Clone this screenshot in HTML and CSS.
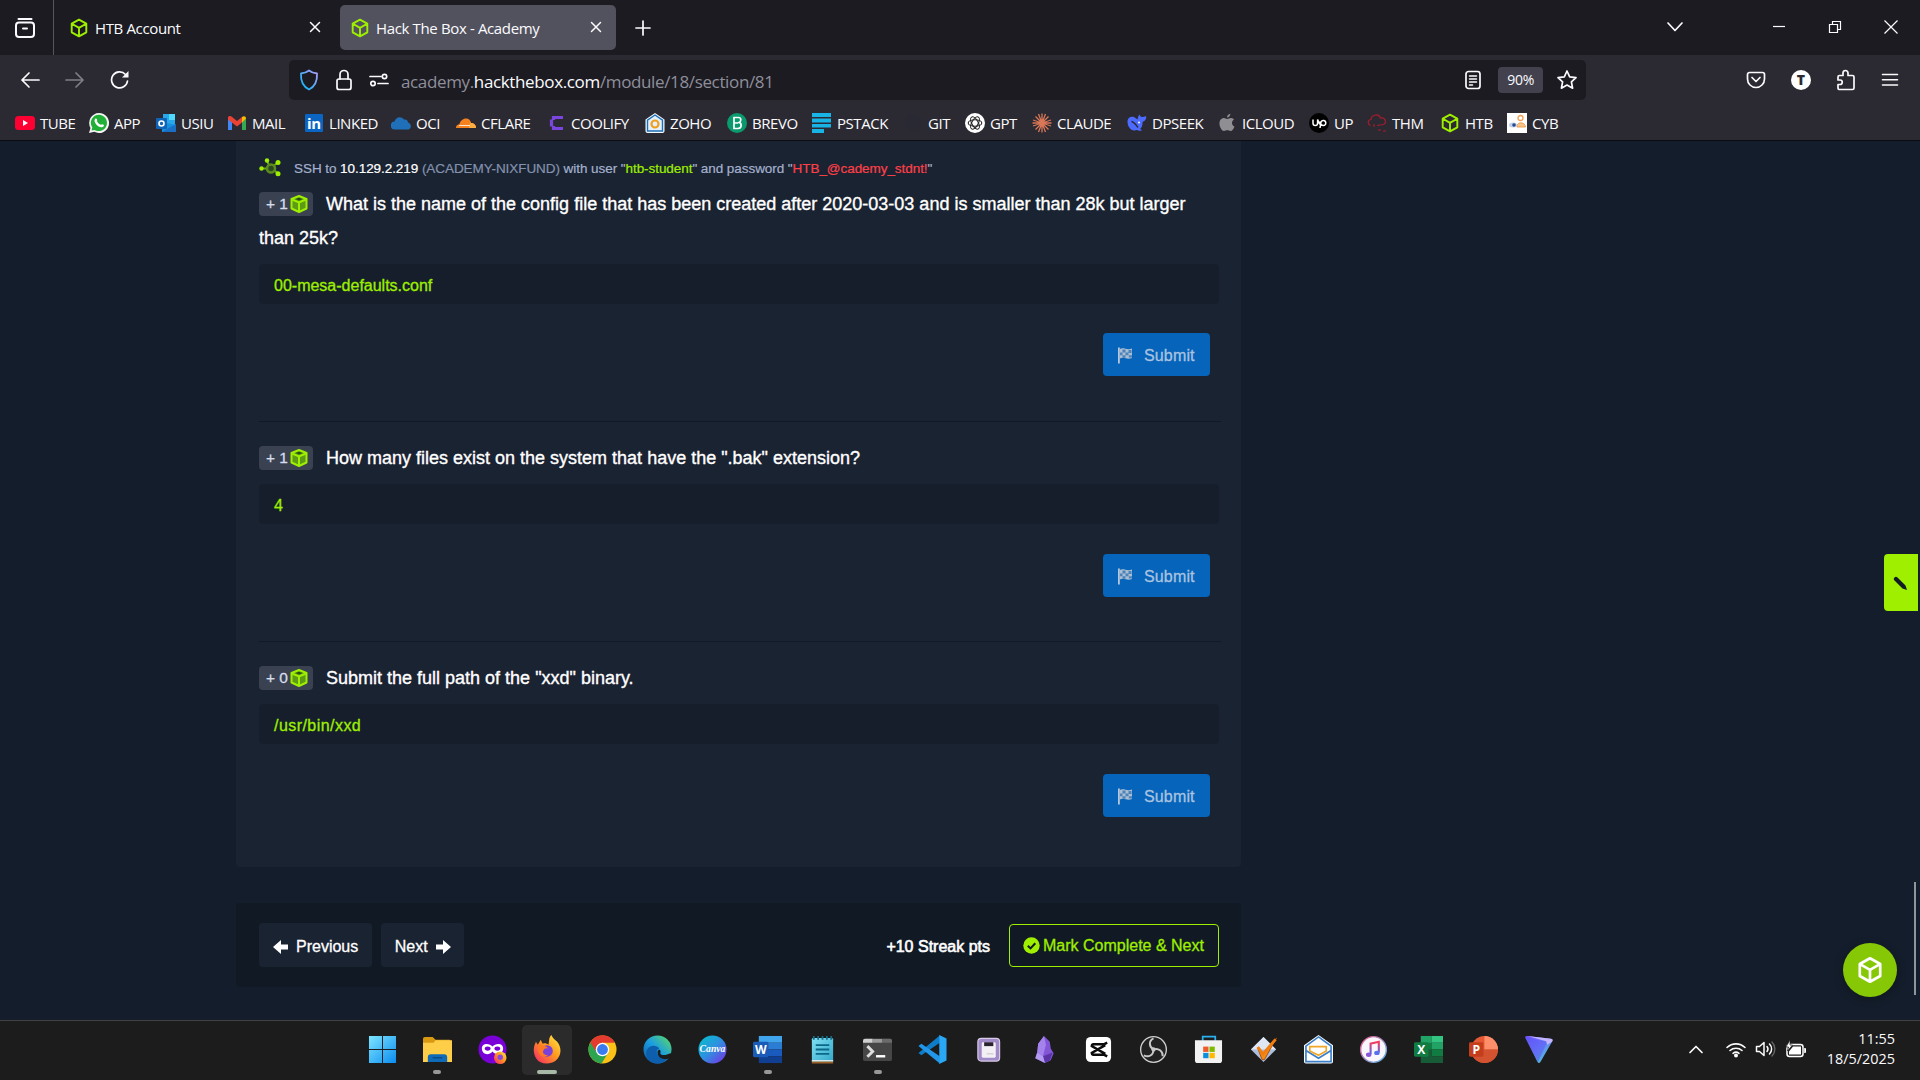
FILE: index.html
```
<!DOCTYPE html>
<html lang="en">
<head>
  <meta charset="UTF-8">
  <title>Hack The Box - Academy</title>
  <link rel="stylesheet" href="styles.css">
</head>
<body>

<svg class="defs">
  <defs>
    <symbol id="cube" viewBox="0 0 20 20">
      <path d="M10 1.6 17.3 5.7v8.6L10 18.4 2.7 14.3V5.7zM2.9 5.8 10 9.9l7.1-4.1M10 9.9v8.3" fill="none" stroke="currentColor" stroke-width="1.9" stroke-linejoin="round"/>
    </symbol>
    <symbol id="box" viewBox="0 0 18 18">
      <path d="M9 1 16.5 4v9.5L9 17 1.500 13.500V4z" fill="#5d9a16" stroke="#9fef00" stroke-width="2" stroke-linejoin="round"/>
      <path d="M2 4.500 9 7.500l7-3M9 7.500V17" fill="none" stroke="#9fef00" stroke-width="2"/>
      <path d="M5.500 4 9 2.800 12.500 4 9 5.500z" fill="#2b4a1c"/>
    </symbol>
    <symbol id="flag" viewBox="0 0 16 17">
      <path d="M1 .5h1.800V16.500H1z" fill="#b5c7da"/>
      <path d="M2.800 2c4-2 7 1.500 12.200-.5v9.500c-5 2-8-1.500-12.200.5z" fill="#a9bdd3"/>
      <path d="M5.500 2.500h3v3h-3zM11.500 3h3v3h-3zM8.500 5.500h3v2.800h-3zM3 5.500h2.500v2.800H3zM5.500 8.300h3v2.400h-3zM11.800 8.300H15v2.300h-3.200z" fill="#4c83bb"/>
    </symbol>
    <linearGradient id="gShield" x1="0" y1="1" x2="1" y2="0"><stop offset="0" stop-color="#00b7f4"/><stop offset="1" stop-color="#b29cf8"/></linearGradient>
    <linearGradient id="gWin" x1="0" y1="0" x2="1" y2="1"><stop offset="0" stop-color="#7fe6ff"/><stop offset="1" stop-color="#0a8cf0"/></linearGradient>
    <linearGradient id="gFox" x1="1" y1="0" x2="0" y2="1"><stop offset="0" stop-color="#fff04a"/><stop offset=".45" stop-color="#ff9a1f"/><stop offset="1" stop-color="#f5206a"/></linearGradient>
    <linearGradient id="gEdge" x1="0" y1="1" x2="1" y2="0"><stop offset="0" stop-color="#0c59a4"/><stop offset=".5" stop-color="#1b9de2"/><stop offset="1" stop-color="#62de5a"/></linearGradient>
    <linearGradient id="gCanva" x1="0" y1="0" x2="1" y2="1"><stop offset="0" stop-color="#00c4cc"/><stop offset=".5" stop-color="#2f8fe0"/><stop offset="1" stop-color="#7d2ae8"/></linearGradient>
    <linearGradient id="gNote" x1="0" y1="0" x2="1" y2="1"><stop offset="0" stop-color="#7fe0f2"/><stop offset="1" stop-color="#32a7c9"/></linearGradient>
    <linearGradient id="gMusic" x1="0" y1="0" x2="0" y2="1"><stop offset="0" stop-color="#fa3c5a"/><stop offset="1" stop-color="#4a6cf0"/></linearGradient>
    <linearGradient id="gRing" x1="0" y1="0" x2="1" y2="1"><stop offset="0" stop-color="#f05a8c"/><stop offset="1" stop-color="#58b8f0"/></linearGradient>
    <linearGradient id="gVpn" x1="0" y1="0" x2="1" y2="1"><stop offset="0" stop-color="#6d4aff"/><stop offset=".45" stop-color="#6f7bff"/><stop offset="1" stop-color="#3de0c0"/></linearGradient>
  </defs>
</svg>

<div class="browser">
  <header class="tabbar">
    <div class="firefox-view">
      <svg width="22" height="22" viewBox="0 0 22 22" fill="none" stroke="#fbfbfe" stroke-width="2" stroke-linecap="round"><path d="M4.500 2h13"/><rect x="2" y="5.500" width="18" height="14.500" rx="3"/><path d="M9 11.500h4"/></svg>
    </div>
    <div class="tab">
      <svg class="fav" width="20" height="20"><use href="#cube"/></svg>
      <span>HTB Account</span>
      <svg class="close" width="12" height="12" viewBox="0 0 12 12"><path d="M1.500 1.500l9 9M10.500 1.500l-9 9"/></svg>
    </div>
    <div class="tab active">
      <svg class="fav" width="20" height="20"><use href="#cube"/></svg>
      <span>Hack The Box - Academy</span>
      <svg class="close" width="12" height="12" viewBox="0 0 12 12"><path d="M1.500 1.500l9 9M10.500 1.500l-9 9"/></svg>
    </div>
    <svg class="line plus" width="16" height="16" viewBox="0 0 16 16"><path d="M8 1v14M1 8h14"/></svg>
    <div class="window-controls">
      <svg class="line" width="18" height="12" viewBox="0 0 18 12"><path d="M2 2l7 7.500L16 2"/></svg>
      <svg class="thin min" width="14" height="14" viewBox="0 0 14 14"><path d="M1 6.500h12"/></svg>
      <svg class="thin" width="14" height="14" viewBox="0 0 14 14"><path d="M1.500 4.500h8v8h-8zM4.500 4.500v-3h8v8h-3"/></svg>
      <svg class="thin" width="14" height="14" viewBox="0 0 14 14"><path d="M.5 .5l13 13M13.500.5l-13 13"/></svg>
    </div>
  </header>

  <div class="toolbar">
    <div class="nav">
      <svg class="line" width="20" height="18" viewBox="0 0 20 18"><path d="M9 2 2 9l7 7M2 9h17"/></svg>
      <svg class="line dim" width="20" height="18" viewBox="0 0 20 18"><path d="M11 2l7 7-7 7M18 9H1"/></svg>
      <svg class="line" width="20" height="20" viewBox="0 0 20 20"><path d="M17.500 11A8 8 0 1 1 15.500 4.500"/><path d="M18.500 1v6.500H12z" fill="#fbfbfe" stroke="none"/></svg>
    </div>
    <div class="urlbar">
      <svg width="20" height="22" viewBox="0 0 20 22" fill="none" stroke="url(#gShield)" stroke-width="1.800" stroke-linejoin="round"><path d="M10 1.500c2.500 2 5 2.800 8 3 .4 7-2 13-8 16-6-3-8.400-9-8-16 3-.2 5.500-1 8-3z"/></svg>
      <svg class="line lock" width="18" height="22" viewBox="0 0 18 22"><rect x="2" y="10" width="14" height="10.500" rx="2"/><path d="M5 10V5.500a4 4 0 0 1 8 0V10"/></svg>
      <svg class="line perms" width="20" height="14" viewBox="0 0 20 14"><path d="M1 3.500h11M9 10.500h10"/><circle cx="15.500" cy="3.500" r="2.200"/><circle cx="4" cy="10.500" r="2.200"/></svg>
      <p class="url">academy.<b>hackthebox.com</b>/module/18/section/81</p>
      <svg class="line" width="18" height="20" viewBox="0 0 18 20"><rect x="2" y="1.500" width="14" height="17" rx="2.500"/><path d="M5.500 6h7M5.500 9h7M5.500 12h7M5.500 15h3" stroke-width="1.500"/></svg>
      <span class="zoom">90%</span>
      <svg class="line star" width="22" height="22" viewBox="0 0 22 22"><path d="M11 2l2.700 5.800 6.300.8-4.600 4.300 1.200 6.300L11 16.100l-5.600 3.100 1.200-6.300L2 8.600l6.300-.8z"/></svg>
    </div>
    <div class="actions">
      <svg class="line" width="20" height="18" viewBox="0 0 20 18"><path d="M3.500 1.500h13A2 2 0 0 1 18.500 3.500v4.500a8.500 8.500 0 0 1-17 0V3.500a2 2 0 0 1 2-2zM6 6.500l4 4 4-4"/></svg>
      <span class="account">T</span>
      <svg class="line" width="20" height="22" viewBox="0 0 20 22"><path d="M3 20.500h13.500a1.500 1.500 0 0 0 1.500-1.500V8a1.500 1.500 0 0 0-1.500-1.500H12V4a2.500 2.500 0 0 0-5 0v2.500H3.500A1.500 1.500 0 0 0 2 8v3h2a2.200 2.200 0 0 1 0 4.500H2v3.500a1.500 1.500 0 0 0 1 1.500z"/></svg>
      <svg class="line" width="18" height="16" viewBox="0 0 18 16"><path d="M1.500 2.500h15M1.500 7.700h15M1.500 13h15" stroke-width="1.600"/></svg>
    </div>
  </div>

  <nav class="bookmarks">
    <a><svg viewBox="0 0 20 20"><rect y="3" width="20" height="14" rx="3.500" fill="#ff0033"/><path d="M8 7l5 3-5 3z" fill="#fff"/></svg>TUBE</a>
    <a><svg viewBox="0 0 20 20"><path d="M10 0a10 10 0 1 1-4.700 18.800L0 20l1.500-5A10 10 0 0 1 10 0z" fill="#f4f4f4"/><path d="M10 1.700a8.200 8.200 0 1 1-4.500 15.200L2.500 17.500l.8-3A8.200 8.200 0 0 1 10 1.700z" fill="#20b038"/><path d="M6.500 5.500c1.500-.5 2 1.800 1.500 2.800 1 2 2 3 4 3.500 1.500-1.500 3 .2 3 1-1.500 2.500-5 1.500-7-.5S4.500 7 6.500 5.500z" fill="#fff"/></svg>APP</a>
    <a><svg viewBox="0 0 20 20"><path d="M7 1h12v12H7z" fill="#28a8ea"/><path d="M13 1h6v6h-6z" fill="#50d9ff"/><path d="M6 9l14 3v7H6z" fill="#1490df"/><path d="M6 19l14-8v8z" fill="#1a6fc4"/><rect y="5" width="11" height="11" rx="1" fill="#0f64b8"/><circle cx="5.500" cy="10.500" r="2.500" fill="none" stroke="#fff" stroke-width="1.600"/></svg>USIU</a>
    <a><svg viewBox="0 0 20 20"><path d="M1 5v12h4V9z" fill="#4285f4"/><path d="M19 5v12h-4V9z" fill="#34a853"/><path d="M1 4.500C1 3 3 2.500 4.500 3.500L10 8l5-4v5.500l-5 4-9-7z" fill="#ea4335"/><path d="M15 4c2-1.500 4-.5 4 1.500l-4 4z" fill="#fbbc04"/></svg>MAIL</a>
    <a><svg viewBox="0 0 20 20"><rect x="1" y="1" width="18" height="18" rx="1" fill="#0a66c2"/><text x="3" y="15.500" class="in">in</text></svg>LINKED</a>
    <a><svg viewBox="0 0 20 20"><path d="M4 16.500a4 4 0 0 1-.5-8C4.500 4 10 2.500 13 6.500c3-.3 4 1.500 4 3 4 1 3.500 7 0 7z" fill="#1f70b8"/></svg>OCI</a>
    <a><svg viewBox="0 0 20 20"><path d="M0 15c0-2.500 1.500-3.500 3.500-3.700C4 8 7 5.500 10 5.500c3 0 4.500 2 5.200 4.500C18 10 20 12 20 15z" fill="#f6821f"/><path d="M14 10c4-.5 6 2 6 5h-7z" fill="#fbad41"/><path d="M3 12.500h11" stroke="#fff" stroke-width=".8"/></svg>CFLARE</a>
    <a><svg viewBox="0 0 20 20"><path d="M17 4.500H7.500V7M17 15.500H7.500V13M5.500 6.500v7" fill="none" stroke="#7b45e0" stroke-width="3.200"/></svg>COOLIFY</a>
    <a><svg viewBox="0 0 20 20"><path d="M10 0l9.500 6.500V18A2 2 0 0 1 17.500 20h-15A2 2 0 0 1 .5 18V6.500z" fill="#f5f8fc"/><path d="M10 2l7.500 5.200V18h-15V7.200z" fill="#e4f1fc" stroke="#1c6eb4" stroke-width="1.400"/><circle cx="10" cy="11" r="3.500" fill="none" stroke="#f0a020" stroke-width="2.200"/></svg>ZOHO</a>
    <a><svg viewBox="0 0 20 20"><circle cx="10" cy="10" r="10" fill="#0b996e"/><path d="M7 4.500h4.500c3 0 3 4 .5 5 3 .5 3 6-1 6H7zM7 10h4" fill="none" stroke="#fff" stroke-width="1.700"/></svg>BREVO</a>
    <a><svg viewBox="0 0 20 20"><path d="M0 0h19v4H0zM0 5.500h19v4H0zM0 11h19v3.500H0zM0 16h12v4H0z" fill="#18b4e6"/></svg>PSTACK</a>
    <a><svg viewBox="0 0 20 20"><circle cx="10" cy="10" r="8" fill="#292933"/></svg>GIT</a>
    <a><svg viewBox="0 0 20 20"><circle cx="10" cy="10" r="10" fill="#fff"/><g fill="none" stroke="#222" stroke-width="1.100"><ellipse cx="10" cy="10" rx="6.800" ry="3.200"/><ellipse cx="10" cy="10" rx="6.800" ry="3.200" transform="rotate(60 10 10)"/><ellipse cx="10" cy="10" rx="6.800" ry="3.200" transform="rotate(120 10 10)"/></g></svg>GPT</a>
    <a><svg viewBox="0 0 20 20"><path d="M10 .5v19M.5 10h19M3.500 3.500l13 13M16.500 3.500l-13 13M6.500 1l7 18M13.500 1l-7 18M1 7l18 6M1 13l18-6" stroke="#d97757" stroke-width="1.300"/></svg>CLAUDE</a>
    <a><svg viewBox="0 0 20 20"><path d="M.5 8C.8 4.500 4 3 7 4l3.500 2.500C11 3.500 12 2 12.500 1.500c.5 2.500 3 3.500 6.500 1.500.8 3-1 5-3.500 6 .3 3.500-.8 5.500-2.500 7 1.500.6 2 1 1.500 1.500-2 .6-3.500 0-4.500-.6C4.500 19 .2 14 .5 8z" fill="#4d6bfe"/><path d="M4.500 8.500c3 .5 4.500 3.500 6.500 6" stroke="#2b2a33" stroke-width="1.500" fill="none"/><circle cx="12" cy="9.500" r="1" fill="#fff"/></svg>DPSEEK</a>
    <a><svg viewBox="0 0 20 20"><path d="M10 6c1.500 0 2.500-1 4-1s2.500.8 3 1.500c-3 2-2.300 6 .5 7-1 2.500-2.300 4.500-4 4.500-1.200 0-1.800-.7-3.200-.7S8.200 18 7 18c-2.500 0-5-5-4.500-8.500S5.500 5 7 5s2 1 3 1zM10 4.500C10 2.500 11.500 1 13.300.8c.2 2-1.300 3.700-3.300 3.700z" fill="#8e8e93"/></svg>ICLOUD</a>
    <a><svg viewBox="0 0 20 20"><circle cx="10" cy="10" r="10" fill="#000"/><path d="M4 6.500v3.800a2.300 2.300 0 0 0 4.600 0V6.500c.8 3 1.800 4.500 3 5.500M11 15l1-6a2.500 2.500 0 1 1 2.500 3.500c-2 0-3.500-2-4-4" fill="none" stroke="#fff" stroke-width="1.500"/></svg>UP</a>
    <a><svg viewBox="0 0 20 20"><path d="M3.500 12.500C0 11 1 6.500 4 6.500 4.500 1 12 .5 13.500 5c5-1 6.500 5 3 6.500L10 12.500M7 11v3M11 17h3M16 18h3" fill="none" stroke="#a51c2c" stroke-width="1.200"/></svg>THM</a>
    <a class="htb"><svg viewBox="0 0 20 20"><use href="#cube"/></svg>HTB</a>
    <a><svg viewBox="0 0 20 20"><rect width="20" height="20" fill="#fff"/><circle cx="13.500" cy="5" r="2.500" fill="none" stroke="#f0a050" stroke-width="1.300"/><path d="M10 14c-1-5 8-6 8.500 0z" fill="#f6c48c" stroke="#f0a050"/><ellipse cx="6" cy="12" rx="4" ry="2.500" fill="#c4d2e8"/><circle cx="7" cy="12" r="1.800" fill="#244a98"/></svg>CYB</a>
  </nav>
</div>

<main class="page">
  <section class="card questions">
    <div class="ssh">
      <svg width="24" height="20" viewBox="0 0 24 20"><path d="M2.500 10.500H8M8 3l2 4M19 4.500l-4 3M19 15.500l-4-3.500" stroke="#6fae12" stroke-width="1.800"/><circle cx="12" cy="10.500" r="4" fill="#2b4a22" stroke="#5c8d1e" stroke-width="2.500"/><g fill="#9fef00"><circle cx="2.500" cy="10.500" r="2.200"/><circle cx="8" cy="2.500" r="2.200"/><circle cx="19" cy="4.500" r="2.500"/><circle cx="19" cy="15.800" r="2.500"/></g></svg>
      <p>SSH to <span class="ip">10.129.2.219</span> <span class="host">(ACADEMY-NIXFUND)</span> with user "<span class="user">htb-student</span>" and password "<span class="pass">HTB_@cademy_stdnt!</span>"</p>
    </div>

    <div class="question">
      <p><span class="badge">+ 1 <svg width="18" height="18"><use href="#box"/></svg></span>What is the name of the config file that has been created after 2020-03-03 and is smaller than 28k but larger<br>than 25k?</p>
      <div class="answer">00-mesa-defaults.conf</div>
      <button class="submit"><svg width="16" height="17"><use href="#flag"/></svg>Submit</button>
    </div>

    <div class="question">
      <p><span class="badge">+ 1 <svg width="18" height="18"><use href="#box"/></svg></span>How many files exist on the system that have the ".bak" extension?</p>
      <div class="answer">4</div>
      <button class="submit"><svg width="16" height="17"><use href="#flag"/></svg>Submit</button>
    </div>

    <div class="question">
      <p><span class="badge">+ 0 <svg width="18" height="18"><use href="#box"/></svg></span>Submit the full path of the "xxd" binary.</p>
      <div class="answer path">/usr/bin/xxd</div>
      <button class="submit"><svg width="16" height="17"><use href="#flag"/></svg>Submit</button>
    </div>
  </section>

  <section class="card pager">
    <button class="nav-btn"><svg width="16" height="16" viewBox="0 0 16 16"><path d="M8 1v4.500h7v5H8V15L0 8z"/></svg>Previous</button>
    <button class="nav-btn next">Next<svg width="16" height="16" viewBox="0 0 16 16"><path d="M8 1v4.500H1v5h7V15l8-7z"/></svg></button>
    <span class="streak">+10 Streak pts</span>
    <button class="complete"><svg width="17" height="17" viewBox="0 0 17 17"><circle cx="8.500" cy="8.500" r="8.200" fill="#9fef00"/><path d="M4.800 8.800l2.700 2.600 4.800-5.200" fill="none" stroke="#101924" stroke-width="2"/></svg>Mark Complete &amp; Next</button>
  </section>

  <div class="notes-tab"><svg width="16" height="16" viewBox="0 0 16 16"><path d="M1.500 1.500c1-1.200 2-1 3 0l8 8 1.500 4.500-4.500-1.500-8-8c-1-1-1-2 0-3z" fill="#111a26"/></svg></div>
  <div class="fab"><svg width="28" height="28"><use href="#cube"/></svg></div>
  <div class="scrollbar"></div>
</main>

<footer class="taskbar">
  <div class="apps">
    <div class="app"><svg viewBox="0 0 30 30"><path d="M1 1h13.500v13.500H1zM15.500 1H29v13.500H15.500zM1 15.500h13.500V29H1zM15.500 15.500H29V29H15.500z" fill="url(#gWin)"/></svg></div>
    <div class="app open"><svg viewBox="0 0 30 30"><path d="M0 4a2 2 0 0 1 2-2h8l3 3h15v8H0z" fill="#d99a12"/><path d="M0 8h11l2-2.500h17V28H0z" fill="#ffce48"/><path d="M5 28v-5a3 3 0 0 1 3-3h14a3 3 0 0 1 3 3v5z" fill="#0f6ab8"/><path d="M10 23.500h10" stroke="#0a4a86" stroke-width="1.500"/></svg></div>
    <div class="app"><svg viewBox="0 0 30 30"><circle cx="15" cy="15" r="14.500" fill="#7a00d8"/><path d="M4 14c0-6 8-6 11-2 3-4 11-4 11 2s-7 8-11 3c-4 5-11 3-11-3z" fill="#fff"/><ellipse cx="10" cy="14" rx="3" ry="2.200" fill="#7a00d8"/><ellipse cx="20" cy="14" rx="3" ry="2.200" fill="#7a00d8"/><circle cx="23" cy="23.500" r="6.500" fill="url(#gFox)"/><circle cx="23" cy="23" r="2.800" fill="#8a4ae0"/></svg></div>
    <div class="app active"><svg viewBox="0 0 30 30"><path d="M19 0c1 3 3 4 6 7 7 8 3 22-10 22.500C3 30 0 20 1 13c.4-3 1.500-4 2-6l2 3 3-5 2 4c3-1 4 0 6 1 1-4 0-7 3-10z" fill="url(#gFox)"/><circle cx="14.500" cy="16.500" r="6" fill="#7a42d8"/><path d="M5 11c4-1 8 0 11 3-3-1-4 0-5 1.500-2 3 1 6 5 5-6 5-12-1-11-9.500z" fill="#ff7a24"/></svg></div>
    <div class="app"><svg viewBox="0 0 30 30"><circle cx="15" cy="15" r="14.500" fill="#fbc116"/><path d="M15 15L2.400 7.700A14.500 14.500 0 0 0 14 29.500L21 18z" fill="#2da44e"/><path d="M15 8H27.800A14.500 14.500 0 0 0 2.400 7.700L9 18z" fill="#e33b2e"/><circle cx="15" cy="15" r="7" fill="#fff"/><circle cx="15" cy="15" r="5.600" fill="#3a7cf0"/></svg></div>
    <div class="app"><svg viewBox="0 0 30 30"><circle cx="15" cy="15" r="14.500" fill="url(#gEdge)"/><path d="M4 24C0 12 12 8 17 14c-5 1-4 10 9 9-5 9-17 8-22 1z" fill="#0d5fae"/><path d="M15 17c1-3 4-2 3 1-1 3 5 4 10 1l2 1-2 4-4 1c-6 0-9-3-9-8z" fill="#1c1c1c"/></svg></div>
    <div class="app"><svg viewBox="0 0 30 30"><circle cx="15" cy="15" r="14.500" fill="url(#gCanva)"/><text x="15" y="18" class="canva">Canva</text></svg></div>
    <div class="app open"><svg viewBox="0 0 30 30"><path d="M6 1h24v7H6z" fill="#41a5ee"/><path d="M6 8h24v7H6z" fill="#2b7cd3"/><path d="M6 15h24v7H6z" fill="#185abd"/><path d="M6 22h24v7H6z" fill="#103f91"/><rect y="7" width="16" height="16" rx="1.500" fill="#1b5bb8"/><text x="8" y="19.500" class="letter">W</text></svg></div>
    <div class="app"><svg viewBox="0 0 30 30"><rect x="4" y="3" width="22" height="26" rx="1.500" fill="url(#gNote)"/><path d="M4 26h22v1.500H4z" fill="#f2f2f2"/><path d="M4 27.500h22V29.500H4z" fill="#9c6128"/><path d="M8 10.500h14M8 15h14M8 19.500h14" stroke="#0b6887" stroke-width="2"/><path d="M6 1v4M10.500 1v4M15 1v4M19.500 1v4M24 1v4" stroke="#166b88" stroke-width="1.800"/></svg></div>
    <div class="app open"><svg viewBox="0 0 30 30"><rect y="4" width="30" height="23" rx="2" fill="#464646"/><path d="M0 8V6a2 2 0 0 1 2-2h8v4z" fill="#d0d0d0"/><path d="M10 4h10v4H10z" fill="#9a9a9a"/><path d="M20 4h8a2 2 0 0 1 2 2v2H20z" fill="#6b6b6b"/><path d="M4.500 11.500l5.500 5.500-5.500 5.500" fill="none" stroke="#ddd" stroke-width="3"/><path d="M13.500 22h9.500" stroke="#fff" stroke-width="2.500"/></svg></div>
    <div class="app"><svg viewBox="0 0 30 30"><path d="M.5 18.500L3.500 21 22.500 8V.5z" fill="#0f7cc8"/><path d="M.5 11.500L3.500 9l19 13v7.500z" fill="#2296e8"/><path d="M22 0l7.500 3.500v23L22 30z" fill="#2aa8f5"/></svg></div>
    <div class="app"><svg viewBox="0 0 30 30"><rect x="4" y="3.500" width="22.500" height="23.500" rx="3.500" fill="#a18ac8" stroke="#d9cce8" stroke-width="1.200"/><rect x="8" y="7.500" width="14.500" height="16" rx="1.500" fill="#f2f0f4"/><rect x="10.500" y="7.500" width="9.500" height="4" fill="#2b2230"/><path d="M13 19.500h7" stroke="#c2c0c8"/></svg></div>
    <div class="app"><svg viewBox="0 0 30 30"><path d="M15.500 1l6 6 1 7 3 5-3 7-6 3-10-5 2-6 1-9z" fill="#8356d8"/><path d="M15.500 1l-6 8-1 9 6 4 3-12z" fill="#a583ec"/><path d="M14.500 22l10-4-3 8-5 3z" fill="#5b34a6"/><path d="M8.500 18l6 4 2 7-10-5z" fill="#b49bf2"/></svg></div>
    <div class="app"><svg viewBox="0 0 30 30"><rect x="2" y="2" width="26" height="26" rx="5" fill="#fff"/><path d="M22 9.500H9.500a2 2 0 0 0-1.500 2L22 19.500M22 20.500H9.500a2 2 0 0 1-1.500-2L22 10.500M21 9.500l3-1.500M21 20.500l3 1.500" fill="none" stroke="#0b0b0b" stroke-width="2.600"/></svg></div>
    <div class="app"><svg viewBox="0 0 30 30"><circle cx="15" cy="15" r="13.300" fill="#222" stroke="#cfcfcf" stroke-width="1.400"/><path d="M15 15C10 12 10 6 15 3.500M15 15c5-2 10 2 9.500 7M15 15c0 6-5 8.500-10 6" fill="none" stroke="#c8c8c8" stroke-width="2"/><circle cx="15" cy="15" r="2.200" fill="#c8c8c8"/></svg></div>
    <div class="app"><svg viewBox="0 0 30 30"><path d="M9 6V1.800h13V6" fill="none" stroke="#28b0f0" stroke-width="1.800"/><path d="M1 5.500h28V26a3 3 0 0 1-3 3H4a3 3 0 0 1-3-3z" fill="#f2f2f2"/><path d="M9.500 12H15v5.500H9.500z" fill="#f05a28"/><path d="M16 12h5.500v5.500H16z" fill="#7fba00"/><path d="M9.500 18.500H15V24H9.500z" fill="#0a8fe0"/><path d="M16 18.500h5.500V24H16z" fill="#ffb900"/></svg></div>
    <div class="app"><svg viewBox="0 0 30 30"><path d="M15 2l13 13-13 13L2 15z" fill="#a9bddc"/><path d="M15 2l13 13H2z" fill="#dfe7f4"/><path d="M9 13.500l6 6L28.500 3 16 25.500h-2.500z" fill="#f58a14" stroke="#a84808" stroke-width=".9"/><path d="M9 12.500l5.500 7L27.500 4.500" fill="none" stroke="#f07d10" stroke-width="3"/></svg></div>
    <div class="app"><svg viewBox="0 0 30 30"><path d="M15 0l15 10.500V27.500a2 2 0 0 1-2 2H2a2 2 0 0 1-2-2V10.500z" fill="#fff"/><path d="M15 2l13 9.500V27.500H2V11.500zM2 16l13 8 13-8" fill="none" stroke="#3a7fc8" stroke-width="1.700"/><path d="M6 16.500V12h17v4.500L15 21z" fill="none" stroke="#f0a628" stroke-width="1.700"/></svg></div>
    <div class="app"><svg viewBox="0 0 30 30"><circle cx="15" cy="15" r="13.300" fill="#faf7fc" stroke="url(#gRing)" stroke-width="1.500"/><path d="M12 20V9l8.500-2v11" fill="none" stroke="url(#gMusic)" stroke-width="2.200"/><ellipse cx="10" cy="20.500" rx="2.800" ry="2.300" fill="#8a55d8"/><ellipse cx="18.500" cy="18.500" rx="2.800" ry="2.300" fill="#5870f0"/></svg></div>
    <div class="app"><svg viewBox="0 0 30 30"><path d="M7 1h11.500v14H7z" fill="#21a366"/><path d="M18.500 1H30v7H18.500z" fill="#33c481"/><path d="M18.500 8H30v7H18.500z" fill="#21a366"/><path d="M7 8h11.500v7H7zM18.500 15H30v7H18.500z" fill="#107c41"/><path d="M7 15h11.500v7H30v7H7z" fill="#185c37"/><rect y="7.500" width="15" height="15" rx="1.500" fill="#107c41"/><text x="7.500" y="19.500" class="letter">X</text></svg></div>
    <div class="app"><svg viewBox="0 0 30 30"><circle cx="16" cy="15" r="14" fill="#e55a34"/><path d="M16 1a14 14 0 0 1 14 14H16z" fill="#ff8f6b"/><path d="M2 15h28a14 14 0 0 1-28 0z" fill="#d35230"/><rect y="7.500" width="15" height="15" rx="1.500" fill="#c43e1c"/><text x="7.500" y="19.500" class="letter">P</text></svg></div>
    <div class="app"><svg viewBox="0 0 30 30"><path d="M1.500 3c-1-1.500.5-2 2-2L28 4c2 .3 2 2 1 3L17 28c-1 1.500-2.500 1-3 0z" fill="url(#gVpn)"/><path d="M1.500 3L22 6.500c2 .3 1.500 2 1 3L14.500 28z" fill="#5a5cf0" opacity=".55"/><path d="M3.500 1L28 4c2 .3 2 2 1 3l-5 3-1-3.500z" fill="#c4b4ff"/></svg></div>
  </div>
  <div class="tray">
    <svg class="line up" width="16" height="10" viewBox="0 0 16 10"><path d="M2 8.500l6-6 6 6"/></svg>
    <svg class="line wifi" width="22" height="18" viewBox="0 0 22 18"><path d="M2 7.500a13 13 0 0 1 18 0M5 10.500a9 9 0 0 1 12 0M8 13.300a5 5 0 0 1 6 0" stroke-width="1.600"/><circle cx="11" cy="15.500" r="2" fill="#fff" stroke="none"/></svg>
    <svg class="line sound" width="22" height="18" viewBox="0 0 22 18"><path d="M1.500 6.500v5h3L9 15.500v-13L4.500 6.500zM12 6.500a4 4 0 0 1 0 5M14.500 4a7 7 0 0 1 0 10" stroke-width="1.500"/><path d="M17 2a10 10 0 0 1 0 14" stroke="#666" stroke-width="1.400"/></svg>
    <svg class="battery" width="22" height="18" viewBox="0 0 22 18"><rect x="2" y="4.500" width="16" height="12" rx="2.500" fill="none" stroke="#fff" stroke-width="1.500"/><path d="M8 6.500h8v8H4v-3zM19.200 8h.8a1 1 0 0 1 1 1v3a1 1 0 0 1-1 1h-.8z" fill="#fff"/><path d="M5 0L1 7h2.500L2.500 11 7.500 5H5z" fill="#fff" stroke="#1c1c1c" stroke-width=".7"/></svg>
    <div class="clock">11:55<br>18/5/2025</div>
  </div>
</footer>

</body>
</html>
```
FILE: styles.css
```
* {
  box-sizing: border-box;
}

html, body {
  margin: 0;
  padding: 0;
  height: 100%;
  overflow: hidden;
  background: #141d2b;
}

body {
  display: flex;
  flex-direction: column;
  height: 1080px;
  font-family: "Open Sans", "Noto Sans", sans-serif;
  color: #fbfbfe;
}

p {
  margin: 0;
}

svg {
  flex: none;
  display: block;
}

button {
  font: inherit;
  border: none;
}

.defs {
  position: absolute;
  width: 0;
  height: 0;
}

.line, .thin, .close {
  fill: none;
  stroke: #fbfbfe;
  stroke-width: 1.7;
  stroke-linecap: round;
  stroke-linejoin: round;
}

.thin {
  stroke-width: 1.2;
  stroke-linecap: butt;
  stroke-linejoin: miter;
}

.dim {
  opacity: 0.4;
}

/* browser chrome */

.browser {
  height: 141px;
  background: #2b2a33;
  border-bottom: 1px solid #0c0c13;
}

.tabbar {
  display: flex;
  align-items: center;
  height: 55px;
  background: #1c1b22;
  font-size: 15px;
  letter-spacing: -0.36px;
}

.firefox-view {
  width: 54px;
  height: 55px;
  padding: 17px 0 0 14px;
  border-right: 1px solid #55545f;
}

.tab {
  display: flex;
  align-items: center;
  width: 276px;
  height: 45px;
  margin-left: 5px;
  padding: 0 14px 0 10px;
  border-radius: 5px;
  gap: 6px;
}

.tab + .tab {
  margin-left: 5px;
}

.tab.active {
  background: #52525e;
}

.tab span {
  flex: 1;
  white-space: nowrap;
}

.fav, .htb svg {
  color: #9fef00;
}

.close {
  stroke-width: 1.5;
  margin-bottom: 1px;
}

.plus {
  margin-left: 19px;
  stroke-width: 1.7;
}

.window-controls {
  display: flex;
  align-items: center;
  margin-left: auto;
  padding: 0 22px 1px 0;
  gap: 42px;
}

.window-controls .min {
  margin-left: 46px;
}

.toolbar {
  display: flex;
  align-items: center;
  height: 50px;
}

.nav {
  display: flex;
  align-items: center;
  gap: 25px;
  width: 289px;
  padding-left: 20px;
}

.urlbar {
  display: flex;
  align-items: center;
  width: 1297px;
  height: 40px;
  padding: 0 8px 0 10px;
  border-radius: 5px;
  background: #1c1b22;
}

.lock {
  margin-left: 16px;
}

.perms {
  margin: 0 12px 0 16px;
}

.url {
  flex: 1;
  padding-top: 3px;
  font-size: 17px;
  letter-spacing: -0.36px;
  color: #8f8f9b;
}

.url b {
  font-weight: normal;
  color: #fbfbfe;
}

.zoom {
  margin: 0 13px 0 16px;
  padding: 0 9px;
  border-radius: 4px;
  background: #42414d;
  font-size: 14px;
  line-height: 26px;
  letter-spacing: -0.3px;
}

.actions {
  display: flex;
  align-items: center;
  gap: 25px;
  margin-left: auto;
  padding-right: 21px;
}

.account {
  width: 20px;
  height: 20px;
  border-radius: 50%;
  background: #fff;
  color: #2b2a33;
  font-size: 14px;
  font-weight: 800;
  line-height: 20px;
  text-align: center;
}

.bookmarks {
  display: grid;
  grid-template-columns: 74px 67px 71px 77px 87px 65px 90px 99px 82px 85px 91px 62px 67px 95px 90px 92px 58px 73px 67px 60px;
  height: 35px;
  padding-left: 15px;
  font-size: 15px;
  letter-spacing: -0.45px;
}

.bookmarks a {
  display: flex;
  align-items: center;
  gap: 5px;
  white-space: nowrap;
}

.bookmarks svg {
  width: 20px;
  height: 20px;
}

.in {
  font: bold 15px "Open Sans", sans-serif;
  fill: #fff;
}

/* academy page */

.page {
  position: relative;
  height: 879px;
  padding-left: 236px;
  overflow: hidden;
  font-family: "Liberation Sans", Arial, sans-serif;
  font-size: 16px;
}

.card {
  width: 1005px;
}

.questions {
  height: 726px;
  padding: 15px 22px 0 23px;
  background: #1a2332;
  border-radius: 0 0 4px 4px;
}

.ssh {
  display: flex;
  align-items: center;
  gap: 11px;
  height: 24px;
  margin-bottom: 7px;
  font-size: 13.5px;
  letter-spacing: -0.06px;
  color: #a4b1cd;
  white-space: nowrap;
  -webkit-text-stroke: 0.2px;
}

.ssh .ip {
  color: #fff;
}

.ssh .host {
  color: #8492ad;
}

.ssh .user {
  color: #9fef00;
}

.ssh .pass {
  color: #ff4048;
}

.question {
  display: flex;
  flex-direction: column;
  width: 962px;
  margin-bottom: 19px;
  padding-bottom: 45px;
  border-bottom: 1px solid #111927;
}

.question:last-child {
  border: none;
}

.question p {
  margin-bottom: 9px;
  font-size: 18px;
  line-height: 34px;
  color: #fff;
  white-space: nowrap;
  -webkit-text-stroke: 0.35px #fff;
}

.badge {
  display: inline-flex;
  align-items: center;
  gap: 2px;
  height: 24px;
  width: 54px;
  margin: -2px 13px 0 0;
  padding-left: 7px;
  border-radius: 4px;
  background: #3a4252;
  font-size: 15.5px;
  line-height: 24px;
  color: #d5dcea;
  vertical-align: middle;
  -webkit-text-stroke: 0.3px #d5dcea;
}

.answer {
  height: 40px;
  width: 960px;
  padding-left: 15px;
  border-radius: 4px;
  background: #161e2c;
  color: #9fef00;
  line-height: 43px;
  -webkit-text-stroke: 0.3px;
}

.answer.path {
  letter-spacing: 0.45px;
}

.submit {
  display: flex;
  align-items: center;
  align-self: flex-end;
  gap: 11px;
  width: 107px;
  height: 43px;
  margin: 29px 11px 0 0;
  padding: 2px 0 0 14px;
  border-radius: 4px;
  background: #0664ba;
  color: #a9c3e0;
  letter-spacing: 0.15px;
  -webkit-text-stroke: 0.3px;
}

.question + .question {
  padding-bottom: 44px;
}

.question + .question .submit {
  margin-top: 30px;
}

.pager {
  display: flex;
  align-items: center;
  height: 84px;
  margin-top: 36px;
  padding: 0 22px 0 23px;
  border-radius: 4px;
  background: #101924;
}

.nav-btn {
  display: flex;
  align-items: center;
  gap: 7px;
  height: 44px;
  margin-right: 9px;
  padding: 3px 13.5px 0 14px;
  border-radius: 4px;
  background: #1a2332;
  color: #fff;
  -webkit-text-stroke: 0.3px;
}

.nav-btn svg {
  fill: #fff;
}

.streak {
  margin: 0 19px 0 auto;
  padding-top: 3px;
  color: #fff;
  -webkit-text-stroke: 0.6px #fff;
}

.complete {
  display: flex;
  align-items: center;
  gap: 3px;
  width: 210px;
  height: 43px;
  padding: 1px 0 0 13px;
  border: 1px solid #9fef00;
  border-radius: 4px;
  background: none;
  color: #9fef00;
  white-space: nowrap;
  -webkit-text-stroke: 0.3px;
}

.notes-tab {
  position: absolute;
  top: 413px;
  right: 2px;
  display: flex;
  align-items: center;
  justify-content: center;
  width: 34px;
  height: 57px;
  padding-top: 3px;
  border-radius: 4px 0 0 4px;
  background: #9fef00;
}

.fab {
  position: absolute;
  top: 802px;
  right: 23px;
  display: flex;
  align-items: center;
  justify-content: center;
  width: 54px;
  height: 54px;
  border-radius: 50%;
  background: #86c805;
  color: #fff;
  box-shadow: 0 2px 10px rgba(0, 0, 0, 0.25);
}

.scrollbar {
  position: absolute;
  top: 741px;
  right: 4px;
  width: 2px;
  height: 113px;
  background: #8d969c;
}

/* windows taskbar */

.taskbar {
  display: flex;
  justify-content: space-between;
  height: 60px;
  padding-left: 357px;
  background: #1c1c1c;
  border-top: 1px solid #414141;
}

.apps {
  display: flex;
  gap: 5.1px;
  padding-top: 4px;
}

.app {
  position: relative;
  display: flex;
  align-items: center;
  justify-content: center;
  width: 50px;
  height: 50px;
  padding-bottom: 1px;
  border-radius: 5px;
}

.app svg {
  width: 29px;
  height: 29px;
}

.app.active {
  background: #2b2b2b;
}

.app.open::after, .app.active::after {
  content: "";
  position: absolute;
  bottom: 1px;
  width: 8px;
  height: 4px;
  border-radius: 2px;
  background: #989898;
}

.app.active::after {
  width: 20px;
  background: #a8b9a8;
}

.canva {
  font: italic bold 10px "Liberation Serif", serif;
  fill: #fff;
  text-anchor: middle;
}

.letter {
  font: bold 12.5px "Open Sans", sans-serif;
  fill: #fff;
  text-anchor: middle;
}

.tray {
  display: flex;
  align-items: center;
  padding: 0 25px 3px 0;
}

.wifi {
  margin-left: 21px;
}

.sound {
  margin-left: 8px;
}

.battery {
  margin-left: 8px;
}

.clock {
  width: 88px;
  font-size: 14.4px;
  line-height: 20px;
  text-align: right;
}
```
